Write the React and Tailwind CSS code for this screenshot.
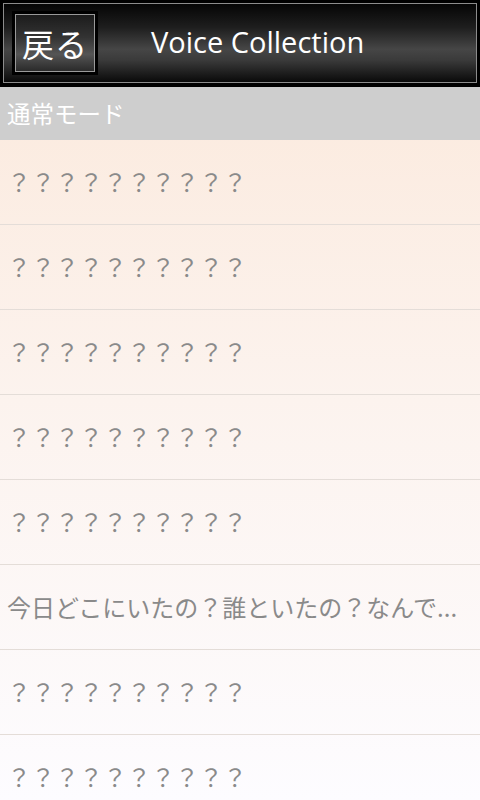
import React from 'react';

const rows = [
    '？？？？？？？？？？',
    '？？？？？？？？？？',
    '？？？？？？？？？？',
    '？？？？？？？？？？',
    '？？？？？？？？？？',
    '今日どこにいたの？誰といたの？なんで...',
    '？？？？？？？？？？',
    '？？？？？？？？？？',
];

const App = () => {
    return (
        <div
            className="w-[480px] h-[800px] overflow-hidden flex flex-col bg-gradient-to-b from-[#fbe8da] via-[#fcf3ee] to-[#fdfcff]"
            style={{ fontFamily: '"Open Sans", "Noto Sans CJK JP", sans-serif' }}
        >
            {/* title bar */}
            <div className="h-[87px] shrink-0 bg-black p-[3px] pb-[4px]">
                <div className="h-full border border-[#8c8c8c] bg-[linear-gradient(to_bottom,#050505_0%,#1e1e1e_30%,#464646_58%,#3a3a3a_72%,#0a0a0a_100%)] flex items-center pl-[8px]">
                    <button className="w-[86px] h-[64px] bg-black p-[3px] shrink-0">
                        <div className="h-full w-full border border-[#9a9a9a] bg-[linear-gradient(to_bottom,#1c1c1c_0%,#333333_40%,#555555_70%,#2a2a2a_100%)] flex items-center justify-center">
                            <span className="text-white text-[32px] leading-none tracking-[1px]" style={{ fontFamily: '"Noto Sans CJK JP", sans-serif' }}>
                                戻る
                            </span>
                        </div>
                    </button>
                    <h1 className="ml-[53px] -mt-[4px] text-white text-[29px] leading-none">
                        Voice Collection
                    </h1>
                </div>
            </div>

            {/* section header */}
            <div className="h-[53px] shrink-0 bg-[#cecece] flex items-center pl-[7px]">
                <span className="text-white text-[23.5px] leading-none" style={{ fontFamily: '"Noto Sans CJK JP", sans-serif' }}>
                    通常モード
                </span>
            </div>

            {/* list */}
            <ul className="flex flex-col">
                {rows.map((text, i) => (
                    <li
                        key={i}
                        className="h-[85px] shrink-0 border-b border-[#e4ddd8] flex items-center pl-[7px]"
                    >
                        <span
                            className="text-[#8a8a8a] text-[24px] leading-none whitespace-nowrap"
                            style={{ fontFamily: '"Noto Sans CJK JP", sans-serif' }}
                        >
                            {text}
                        </span>
                    </li>
                ))}
            </ul>
        </div>
    );
};

export default App;
